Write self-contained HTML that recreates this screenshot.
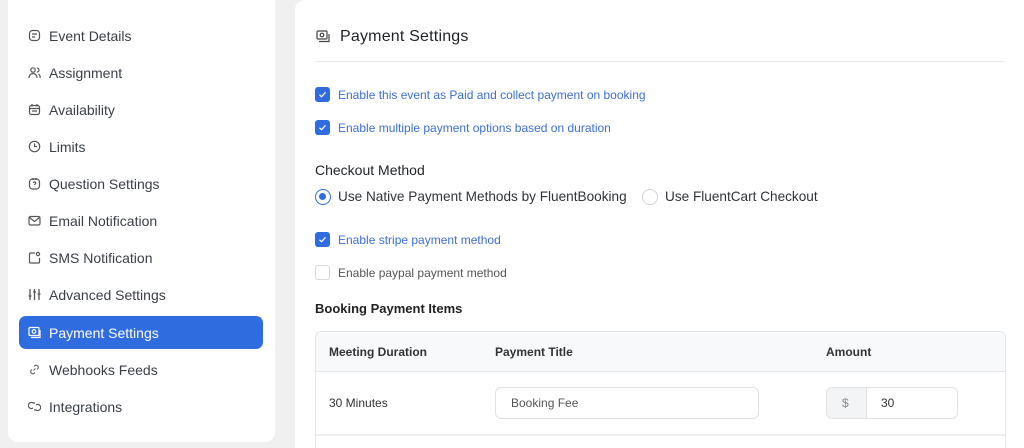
<!DOCTYPE html>
<html style="width:1024px;height:448px;overflow:hidden"><head><style>
*{box-sizing:border-box;margin:0;padding:0}
body{width:1024px;height:448px;overflow:hidden;background:#f0f0f1;font-family:"Liberation Sans",sans-serif;position:relative;color:#1f2328}
.side{position:absolute;left:8px;top:0;width:267px;height:442px;background:#fff;border-radius:0 0 10px 10px}
.it{position:absolute;left:11px;width:244px;height:33px;display:flex;align-items:center;font-size:14px;color:#3a3f47}
.it svg{position:absolute;left:9px;top:10px}
.it span{position:absolute;left:30px}
.it.act{background:#2f6ce0;color:#fff;border-radius:7px}
.main{position:absolute;left:295px;top:0;width:729px;height:448px;background:#fff;border-radius:10px 0 0 0;overflow:hidden}
.t{position:absolute;font-size:13px;white-space:nowrap}
.cb{position:absolute;left:20px;width:15px;height:15px;border-radius:3px;background:#2f6ce0}
.cb svg{position:absolute;left:3px;top:3px}
.cbo{background:#fff;border:1px solid #d5d8dd}
.blue{color:#3b6fd4}
</style></head><body>
<div class="side">
<div class="it" style="top:19px"><svg width="13" height="13" viewBox="0 0 13 13" fill="none" stroke="#555" stroke-width="1.2"><rect x="1.5" y="1.5" width="10" height="10" rx="3"/><path d="M4 5h5M4 8h3"/></svg><span>Event Details</span></div>
<div class="it" style="top:56px"><svg width="13" height="13" viewBox="0 0 13 13" fill="none" stroke="#555" stroke-width="1.2"><circle cx="5" cy="4" r="2.2"/><path d="M1 12c0-3 2-4.5 4-4.5s4 1.5 4 4.5M9 2a2 2 0 010 4M10.5 8c1 .6 1.7 2 1.7 4"/></svg><span>Assignment</span></div>
<div class="it" style="top:93px"><svg width="13" height="13" viewBox="0 0 13 13" fill="none" stroke="#555" stroke-width="1.2"><rect x="1.5" y="2.5" width="10" height="9" rx="2"/><path d="M1.5 5.5h10M4 1v2.5M9 1v2.5M4 8h5"/></svg><span>Availability</span></div>
<div class="it" style="top:130px"><svg width="13" height="13" viewBox="0 0 13 13" fill="none" stroke="#555" stroke-width="1.2"><circle cx="6.5" cy="6.5" r="5.2"/><path d="M6.5 3.5v3h2.5"/></svg><span>Limits</span></div>
<div class="it" style="top:167px"><svg width="13" height="13" viewBox="0 0 13 13" fill="none" stroke="#555" stroke-width="1.2"><rect x="1.5" y="2" width="10" height="10" rx="3"/><path d="M5 1v2M8 1v2M5.3 6a1.2 1.2 0 112 1c-.5.3-.8.6-.8 1M6.5 9.5v.3"/></svg><span>Question Settings</span></div>
<div class="it" style="top:204px"><svg width="13" height="13" viewBox="0 0 13 13" fill="none" stroke="#555" stroke-width="1.2"><rect x="1" y="2.5" width="11" height="8.5" rx="1.5"/><path d="M1.5 3.5l5 4 5-4"/></svg><span>Email Notification</span></div>
<div class="it" style="top:241px"><svg width="13" height="13" viewBox="0 0 13 13" fill="none" stroke="#555" stroke-width="1.2"><path d="M7 2H2.5a1 1 0 00-1 1v8a1 1 0 001 1h8a1 1 0 001-1V7"/><circle cx="10" cy="3" r="1.6"/></svg><span>SMS Notification</span></div>
<div class="it" style="top:278px"><svg width="13" height="13" viewBox="0 0 13 13" fill="none" stroke="#555" stroke-width="1.3"><path d="M2 1v11M6.5 1v11M11 1v11M.5 8h3M5 4h3M9.5 6h3"/></svg><span>Advanced Settings</span></div>
<div class="it act" style="top:316px"><svg width="13" height="13" viewBox="0 0 13 13" fill="none" stroke="#fff" stroke-width="1.2"><rect x="1" y="1.5" width="10" height="8" rx="1"/><circle cx="6" cy="5.5" r="1.8"/><path d="M3 11.5h9V4"/></svg><span>Payment Settings</span></div>
<div class="it" style="top:353px"><svg width="13" height="13" viewBox="0 0 13 13" fill="none" stroke="#666" stroke-width="1.1"><path d="M5.5 7.5l2-2M6 3.5l1-1a2.2 2.2 0 013 3l-1 1M7 9.5l-1 1a2.2 2.2 0 01-3-3l1-1"/></svg><span>Webhooks Feeds</span></div>
<div class="it" style="top:390px"><svg width="13" height="13" viewBox="0 0 13 13" fill="none" stroke="#555" stroke-width="1.2"><path d="M5 8a3 3 0 110-5h2M8 5a3 3 0 110 5H6"/></svg><span>Integrations</span></div>
</div>
<div class="main">
<svg style="position:absolute;left:21px;top:30px" width="14" height="13" viewBox="0 0 14 13" fill="none" stroke="#444" stroke-width="1.2"><rect x="1" y="1" width="10" height="8" rx="1"/><circle cx="6" cy="5" r="1.8"/><path d="M3 11.5h10V4"/></svg>
<div class="t" style="left:45px;top:28px;font-size:16px;color:#1f2328;letter-spacing:.2px">Payment Settings</div>
<div style="position:absolute;left:20px;top:61px;width:690px;height:1px;background:#e8e9ec"></div>
<div class="cb" style="top:87px"><svg width="9" height="9" viewBox="0 0 9 9" fill="none" stroke="#fff" stroke-width="1.2"><path d="M1.5 4.8l2 2 4-4.5"/></svg></div>
<div class="t blue" style="left:43px;top:88px;font-size:12px">Enable this event as Paid and collect payment on booking</div>
<div class="cb" style="top:120px"><svg width="9" height="9" viewBox="0 0 9 9" fill="none" stroke="#fff" stroke-width="1.2"><path d="M1.5 4.8l2 2 4-4.5"/></svg></div>
<div class="t blue" style="left:43px;top:121px;font-size:12px">Enable multiple payment options based on duration</div>
<div class="t" style="left:20px;top:162px;font-size:14px">Checkout Method</div>
<div style="position:absolute;left:20px;top:189px;width:16px;height:16px;border-radius:50%;border:1.5px solid #2f6ce0"><div style="position:absolute;left:3px;top:3px;width:7px;height:7px;border-radius:50%;background:#2f6ce0"></div></div>
<div class="t" style="left:43px;top:189px;font-size:13.6px;color:#30343a">Use Native Payment Methods by FluentBooking</div>
<div style="position:absolute;left:347px;top:189px;width:16px;height:16px;border-radius:50%;border:1px solid #d0d3d8"></div>
<div class="t" style="left:370px;top:189px;font-size:13.6px;color:#30343a">Use FluentCart Checkout</div>
<div class="cb" style="top:232px"><svg width="9" height="9" viewBox="0 0 9 9" fill="none" stroke="#fff" stroke-width="1.2"><path d="M1.5 4.8l2 2 4-4.5"/></svg></div>
<div class="t blue" style="left:43px;top:233px;font-size:12px">Enable stripe payment method</div>
<div class="cb cbo" style="top:265px"></div>
<div class="t" style="left:43px;top:266px;font-size:12px;color:#555">Enable paypal payment method</div>
<div class="t" style="left:20px;top:301px;font-size:13px;font-weight:bold;color:#222">Booking Payment Items</div>
<div style="position:absolute;left:20px;top:331px;width:691px;height:130px;border:1px solid #e3e5e8;border-radius:6px;overflow:hidden">
<div style="height:40px;background:#f8f9fa;border-bottom:1px solid #e3e5e8"></div>
<div style="position:absolute;left:0;top:102px;width:100%;height:2px;background:#eceef0"></div>
</div>
<div class="t" style="left:34px;top:345px;font-size:12px;color:#333;font-weight:bold">Meeting Duration</div>
<div class="t" style="left:200px;top:345px;font-size:12px;color:#333;font-weight:bold">Payment Title</div>
<div class="t" style="left:531px;top:345px;font-size:12px;color:#333;font-weight:bold">Amount</div>
<div class="t" style="left:34px;top:396px;font-size:12px;color:#333">30 Minutes</div>
<div style="position:absolute;left:200px;top:387px;width:264px;height:32px;border:1px solid #dfe1e5;border-radius:6px"></div>
<div class="t" style="left:216px;top:396px;font-size:12px;color:#555">Booking Fee</div>
<div style="position:absolute;left:531px;top:387px;width:132px;height:32px;border:1px solid #dfe1e5;border-radius:6px;overflow:hidden"><div style="width:40px;height:100%;background:#f3f4f6;border-right:1px solid #dfe1e5"></div></div>
<div class="t" style="left:547px;top:396px;font-size:12px;color:#888">$</div>
<div class="t" style="left:586px;top:396px;font-size:12px;color:#333">30</div>
</div>
</body></html>
